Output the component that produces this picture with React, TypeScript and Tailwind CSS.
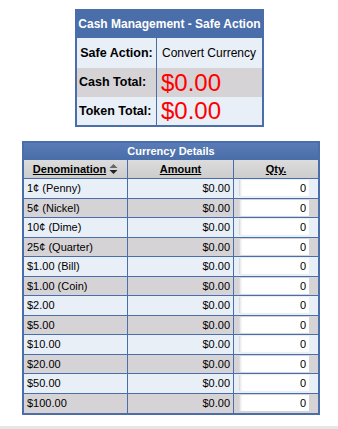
import React from "react";

const rows = [
  "1¢ (Penny)",
  "5¢ (Nickel)",
  "10¢ (Dime)",
  "25¢ (Quarter)",
  "$1.00 (Bill)",
  "$1.00 (Coin)",
  "$2.00",
  "$5.00",
  "$10.00",
  "$20.00",
  "$50.00",
  "$100.00",
];

export default function App() {
  return (
    <div className="w-[338px] h-[429px] bg-white relative font-[Liberation_Sans,Arial,sans-serif] text-black overflow-hidden">
      <div className="pt-[9px] pl-[75px]">
        <div className="w-[189px] border-2 border-[#4a6ea9] border-t-0">
          <div className="h-[29px] bg-[#4a6ea9] text-white font-bold text-[12px] flex items-center justify-center whitespace-nowrap">
            Cash Management - Safe Action
          </div>
          <div className="grid grid-cols-[80px_1fr]">
            <div className="h-[30px] bg-[#e8eff7] border-r border-[#4a6ea9] flex items-center justify-center font-bold text-[12.5px] whitespace-nowrap">
              Safe Action:
            </div>
            <div className="h-[30px] bg-[#e8eff7] flex items-center pl-[5px] text-[12px] whitespace-nowrap">
              Convert Currency
            </div>
            <div className="h-[29px] bg-[#d6d3d6] border-r border-[#4a6ea9] flex items-center pl-[2px] font-bold text-[12.5px] whitespace-nowrap">
              Cash Total:
            </div>
            <div className="h-[29px] bg-[#d6d3d6] flex items-center pl-[4px] text-[24px] text-[#ff0000] leading-none">
              $0.00
            </div>
            <div className="h-[28px] bg-[#e8eff7] border-r border-[#4a6ea9] flex items-center pl-[2px] font-bold text-[12.5px] whitespace-nowrap">
              Token Total:
            </div>
            <div className="h-[28px] bg-[#e8eff7] flex items-center pl-[4px] text-[24px] text-[#ff0000] leading-none">
              $0.00
            </div>
          </div>
        </div>
      </div>

      <div className="pt-[14px] pl-[22px]">
        <div className="w-[298px] border-2 border-[#4a6ea9] text-[11px]">
          <div className="h-[17px] bg-gradient-to-b from-[#5a7cb6] to-[#4a6ea9] text-white font-bold flex items-center justify-center border-b border-[#4a6ea9]">
            Currency Details
          </div>
          <div className="grid grid-cols-[104px_106px_1fr]">
            <div className="h-[19px] bg-gradient-to-b from-[#dcdcdc] to-[#cdcdcd] border-r border-b border-[#4a6ea9] flex items-center justify-center font-bold">
              <span className="underline">Denomination</span>
              <svg width="9" height="10" viewBox="0 0 9 10" className="ml-[3px]">
                <path d="M0.5 4 L4.5 0 L8.5 4 Z" fill="#666" />
                <path d="M0.5 6 L4.5 10 L8.5 6 Z" fill="#222" />
              </svg>
            </div>
            <div className="h-[19px] bg-gradient-to-b from-[#dcdcdc] to-[#cdcdcd] border-r border-b border-[#4a6ea9] flex items-center justify-center font-bold">
              <span className="underline">Amount</span>
            </div>
            <div className="h-[19px] bg-gradient-to-b from-[#dcdcdc] to-[#cdcdcd] border-b border-[#4a6ea9] flex items-center justify-center font-bold">
              <span className="underline">Qty.</span>
            </div>
            {rows.map((r, i) => {
              const bg = i % 2 === 0 ? "bg-[#e8eff7]" : "bg-[#d6d3d6]";
              const bb = i < rows.length - 1 ? "border-b" : "";
              return (
                <React.Fragment key={r}>
                  <div className={`h-[19.5px] ${bg} ${bb} border-r border-[#4a6ea9] flex items-center pl-[3px]`}>
                    {r}
                  </div>
                  <div className={`h-[19.5px] ${bg} ${bb} border-r border-[#4a6ea9] flex items-center justify-end pr-[3px]`}>
                    $0.00
                  </div>
                  <div className={`h-[19.5px] ${bg} ${bb} border-[#4a6ea9] flex items-center pl-[5px]`}>
                    <div className="w-[70px] h-[16px] bg-white shadow-[inset_3px_0_3px_-2px_#c8c8c8] flex items-center justify-end pr-[3px]">
                      0
                    </div>
                  </div>
                </React.Fragment>
              );
            })}
          </div>
        </div>
      </div>

      <div className="absolute left-0 right-0 bottom-0 h-[3px] bg-[#e6e6e6]" />
    </div>
  );
}
